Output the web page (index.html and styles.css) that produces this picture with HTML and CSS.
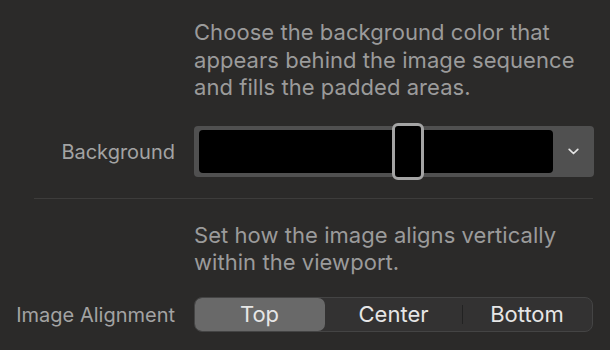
FILE: index.html
```html
<!DOCTYPE html>
<html lang="en">
<head>
<meta charset="UTF-8"/>
<title>Inspector | Background</title>
<link rel="stylesheet" href="styles.css">
</head>
<body>

<!-- ─── BACKGROUND ─────────────────────────────────────────────── -->
<section class="panel">
  <p class="desc">Choose the background color that appears behind the image sequence and fills the padded areas.</p>
  <div class="row row-well">
    <label class="lbl">Background</label>
    <div class="well">
      <div class="swatch"></div>
      <span class="chev">
        <svg width="11" height="7" viewBox="0 0 11 7"><path d="M1.2 1.3 L5.5 5.5 L9.8 1.3" fill="none" stroke="#e4e4e4" stroke-width="1.7" stroke-linecap="round" stroke-linejoin="round"/></svg>
      </span>
      <span class="thumb"></span>
    </div>
  </div>

  <hr class="sep">

<!-- ─── IMAGE ALIGNMENT ────────────────────────────────────────── -->
  <p class="desc desc-b">Set how the image aligns vertically within the viewport.</p>
  <div class="row row-seg">
    <label class="lbl">Image Alignment</label>
    <div class="seg">
      <span class="opt on">Top</span>
      <span class="opt">Center</span>
      <span class="opt div">Bottom</span>
    </div>
  </div>
</section>

</body>
</html>
```

FILE: styles.css
```css
:root{
  --bg:#2b2a29;--muted:#9b9b9b;--label:#a3a3a3;--text:#e6e6e6;
  --frame:#505050;--segbg:#333232;--segon:#696969;
}
*,*::before,*::after{box-sizing:border-box;margin:0;padding:0}
html,body{background:var(--bg)}
body{font-family:Inter,"Noto Sans",sans-serif;font-size:22px;color:var(--text);overflow:hidden}

.panel{padding-top:19px;width:610px}
.desc{margin-left:194px;width:410px;color:var(--muted);line-height:27.5px;letter-spacing:.05px}

/* ─── ROWS ──────────────────────────────────────────────────── */
.row{display:grid;grid-template-columns:175px 400px;column-gap:19px;align-items:center}
.lbl{text-align:right;color:var(--label);font-size:20px;padding-top:1px}
.row-well{margin-top:24px}
.row-seg{margin-top:20px}

/* color well + slider thumb */
.well{position:relative;height:51px;background:var(--frame);border-radius:4px;display:flex;align-items:center;padding:4px 0 4px 5px}
.swatch{width:354px;height:100%;background:#000;border-radius:4px}
.chev{flex:1;display:grid;place-items:center;padding-top:1px}
.thumb{position:absolute;left:198px;top:-3px;width:32px;height:57px;border:3px solid #a4a4a4;border-radius:6px;background:#000}

.sep{border:none;height:1px;background:#3d3c3b;margin:21px 0 0 34px;width:559px}
.desc-b{margin-top:23px}

/* segmented control */
.seg{display:grid;grid-template-columns:130px 137px 1fr;height:35px;width:399px;background:var(--segbg);border:1px solid #444;border-radius:8px;overflow:hidden}
.opt{display:grid;place-items:center;position:relative;color:var(--text)}
.opt.on{background:var(--segon);border-radius:7px;margin:0 0 0 -1px}
.opt.div::before{content:"";position:absolute;left:0;top:7px;bottom:7px;width:1px;background:#222}
```
